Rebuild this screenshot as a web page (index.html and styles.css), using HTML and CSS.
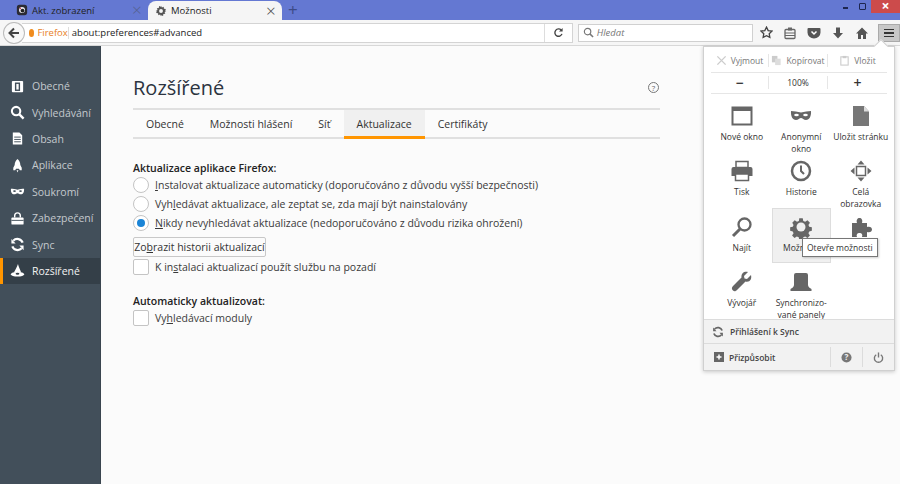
FILE: index.html
```html
<!DOCTYPE html>
<html lang="cs">
<head>
    <meta charset="UTF-8">
    <title>Možnosti</title>
    <link rel="stylesheet" href="styles.css">
</head>
<body>
    <div class="tabbar">
        <div class="tab">
            <svg class="tab-icon" viewBox="0 0 14 14"><rect x="1" y="1" width="12" height="12" rx="3" fill="#2b2b33"/><circle cx="7" cy="7" r="3.5" fill="#e8e8ee"/><circle cx="7.6" cy="7.6" r="2.2" fill="#222"/><circle cx="5" cy="5" r="1" fill="#c8485a"/></svg>
            <span class="tab-title">Akt. zobrazení</span>
            <span class="tab-close dim">×</span>
        </div>
        <div class="tab active">
            <svg class="tab-icon" viewBox="0 0 16 16"><path d="M8 1l1.2 2.2 2.4-.9.3 2.6 2.6.3-.9 2.4L15 8l-2.2 1.2.9 2.4-2.6.3-.3 2.6-2.4-.9L8 15l-1.2-2.2-2.4.9-.3-2.6-2.6-.3.9-2.4L1 8l2.4-1.4-.9-2.4 2.6-.3.3-2.6 2.4.9z" fill="#555"/><circle cx="8" cy="8" r="2.6" fill="#f5f5f5"/></svg>
            <span class="tab-title">Možnosti</span>
            <span class="tab-close">×</span>
        </div>
        <span class="new-tab">+</span>
        <div class="window-controls">
            <span class="win-min"></span>
            <span class="win-max"></span>
            <span class="win-close">×</span>
        </div>
    </div>

    <div class="toolbar">
        <div class="back">
            <svg viewBox="0 0 14 14" width="14" height="14"><path d="M12 7H3M7 2.5L2.5 7 7 11.5" fill="none" stroke="#444" stroke-width="2"/></svg>
        </div>
        <div class="urlbar">
            <span class="identity"><span class="identity-dot"></span>Firefox</span>
            <span class="url">about:preferences#advanced</span>
            <span class="reload">
                <svg viewBox="0 0 12 12" width="11" height="11"><path d="M9.8 7.5A4 4 0 1 1 9 3.4" fill="none" stroke="#444" stroke-width="1.5"/><path d="M10.5 1v4h-4z" fill="#444"/></svg>
            </span>
        </div>
        <div class="searchbar">
            <svg viewBox="0 0 12 12" width="11" height="11"><circle cx="5" cy="5" r="3.5" fill="none" stroke="#777" stroke-width="1.3"/><path d="M7.5 7.5L11 11" stroke="#777" stroke-width="1.6"/></svg>
            <span>Hledat</span>
        </div>
        <div class="toolbar-icons">
            <svg viewBox="0 0 14 14" width="13" height="13"><path d="M7 1.2l1.8 3.7 4 .6-2.9 2.8.7 4L7 10.4l-3.600 1.900.7-4L1.200 5.500l4-.6z" fill="none" stroke="#444" stroke-width="1.400"/></svg>
            <svg viewBox="0 0 14 14" width="14" height="14"><rect x="2" y="3.500" width="10" height="9" rx="1" fill="none" stroke="#666" stroke-width="1.300"/><rect x="5" y="1.500" width="4" height="3" fill="#666"/><path d="M2 7h10M2 9.500h10" stroke="#666"/></svg>
            <svg viewBox="0 0 14 14" width="14" height="14"><path d="M1.500 2h11a1 1 0 0 1 1 1v3.500a6.500 6 0 0 1-13 0V3a1 1 0 0 1 1-1z" fill="#555"/><path d="M4.500 5.500L7 8l2.500-2.500" fill="none" stroke="#fff" stroke-width="1.500"/></svg>
            <svg viewBox="0 0 14 14" width="14" height="14"><path d="M5 1.500h4V7h3l-5 5.500L2 7h3z" fill="#555"/></svg>
            <svg viewBox="0 0 14 14" width="14" height="14"><path d="M7 1.500L1 7.500h2V13h3V9h2v4h3V7.500h2z" fill="#555"/></svg>
        </div>
        <div class="hamburger"><span></span><span></span><span></span></div>
    </div>

    <div class="page">
        <nav class="sidebar">
            <div class="side-item">
                <svg viewBox="0 0 16 16"><rect x="2" y="2" width="12" height="12" rx="1" fill="#fff"/><rect x="6" y="4.500" width="4" height="7.500" fill="none" stroke="#424f5a" stroke-width="1.500"/></svg>
                Obecné
            </div>
            <div class="side-item">
                <svg viewBox="0 0 16 16"><circle cx="6.500" cy="6.500" r="4.500" fill="none" stroke="#fff" stroke-width="2.200"/><path d="M10 10l4.500 4.500" stroke="#fff" stroke-width="2.500"/></svg>
                Vyhledávání
            </div>
            <div class="side-item">
                <svg viewBox="0 0 16 16"><path d="M3 1.500h7l3 3v10H3z" fill="#fff"/><path d="M4.500 6.500h7M4.500 9h7M4.500 11.500h7" stroke="#424f5a"/></svg>
                Obsah
            </div>
            <div class="side-item">
                <svg viewBox="0 0 16 16"><path d="M8 1c2 1.500 3 4 3 6.500l1.500 3V13h-2l-1-1.500h-3L5.500 13h-2v-2.500L5 7.500C5 5 6 2.500 8 1z" fill="#fff"/><path d="M7 13h2l-1 2.500z" fill="#fff"/></svg>
                Aplikace
            </div>
            <div class="side-item">
                <svg viewBox="0 0 16 16"><path d="M1 5c2 0 4.500.5 7 1 2.500-.5 5-1 7-1 .3 3.500-1 6-3.500 6C10 11 9 9.800 8 9.800S6 11 4.500 11C2 11 .7 8.500 1 5z" fill="#fff"/><ellipse cx="4.800" cy="7.500" rx="1.500" ry=".9" fill="#424f5a"/><ellipse cx="11.200" cy="7.500" rx="1.500" ry=".9" fill="#424f5a"/></svg>
                Soukromí
            </div>
            <div class="side-item">
                <svg viewBox="0 0 16 16"><path d="M5 7V5a3 3 0 0 1 6 0v2" fill="none" stroke="#fff" stroke-width="1.500"/><rect x="1.500" y="7" width="13" height="7.500" rx="1" fill="#fff"/><path d="M1.500 10h13" stroke="#424f5a"/></svg>
                Zabezpečení
            </div>
            <div class="side-item">
                <svg viewBox="0 0 16 16"><path d="M13.500 6A6 6 0 0 0 3.500 4M2.500 10a6 6 0 0 0 10 2" fill="none" stroke="#fff" stroke-width="2.400"/><path d="M1.500 2v5h4.500zM14.500 14V9H10z" fill="#fff"/></svg>
                Sync
            </div>
            <div class="side-item selected">
                <svg viewBox="0 0 16 16"><path d="M8.500 1C9 4 11 7 12 10.500H4C5.500 7.500 7.500 4 8.500 1z" fill="#fff"/><ellipse cx="8" cy="12" rx="7" ry="2.500" fill="#fff"/><ellipse cx="8" cy="11.500" rx="2" ry="1" fill="#333d46"/></svg>
                Rozšířené
            </div>
        </nav>

        <main class="content">
            <header class="page-head">
                <h1>Rozšířené</h1>
                <span class="help">?</span>
            </header>
            <div class="tabs">
                <span class="tabs-item">Obecné</span>
                <span class="tabs-item">Možnosti hlášení</span>
                <span class="tabs-item">Síť</span>
                <span class="tabs-item current">Aktualizace</span>
                <span class="tabs-item">Certifikáty</span>
            </div>

            <h2>Aktualizace aplikace Firefox:</h2>
            <div class="option"><span class="radio"></span><span><u>I</u>nstalovat aktualizace automaticky (doporučováno z důvodu vyšší bezpečnosti)</span></div>
            <div class="option"><span class="radio"></span><span>Vyh<u>l</u>edávat aktualizace, ale zeptat se, zda mají být nainstalovány</span></div>
            <div class="option"><span class="radio checked"></span><span><u>N</u>ikdy nevyhledávat aktualizace (nedoporučováno z důvodu rizika ohrožení)</span></div>
            <button class="btn">Zo<u>b</u>razit historii aktualizací</button>
            <div class="option"><span class="check"></span><span>K in<u>s</u>talaci aktualizací použít službu na pozadí</span></div>

            <h2 class="second">Automaticky aktualizovat:</h2>
            <div class="option"><span class="check"></span><span>Vy<u>h</u>ledávací moduly</span></div>
        </main>
    </div>

    <aside class="panel">
        <span class="panel-arrow"></span>
        <div class="panel-body">
            <div class="edit-row muted">
                <span class="edit-cell">
                    <svg viewBox="0 0 12 12" width="11" height="11"><path d="M1.500 1.500l9 9M10.500 1.500l-9 9" stroke="#ccc" stroke-width="1.500"/></svg>
                    Vyjmout
                </span>
                <span class="edit-cell">
                    <svg viewBox="0 0 12 12" width="11" height="11"><rect x="1" y="1" width="6" height="7" fill="#ccc"/><rect x="4.500" y="4" width="6" height="7" fill="#ddd"/></svg>
                    Kopírovat
                </span>
                <span class="edit-cell">
                    <svg viewBox="0 0 12 12" width="11" height="11"><rect x="2" y="2" width="8" height="9" fill="none" stroke="#ccc" stroke-width="1.200"/><rect x="4" y="1" width="4" height="2.500" fill="#ccc"/></svg>
                    Vložit
                </span>
            </div>
            <div class="edit-row zoom-row">
                <span class="edit-cell big">−</span>
                <span class="edit-cell">100%</span>
                <span class="edit-cell big">+</span>
            </div>
            <div class="panel-grid">
                <div class="panel-item">
                    <svg viewBox="0 0 24 24"><rect x="2.500" y="3.500" width="19" height="17" fill="#fff" stroke="#666" stroke-width="2"/><rect x="2.500" y="3.500" width="19" height="3.500" fill="#666"/></svg>
                    <span>Nové okno</span>
                </div>
                <div class="panel-item">
                    <svg viewBox="0 0 24 24"><path d="M2 7c3 0 6.500.8 10 1.500C15.500 7.800 19 7 22 7c.4 5-1.500 9-5 9-2.200 0-3.600-2-5-2s-2.800 2-5 2c-3.500 0-5.400-4-5-9z" fill="#666"/><ellipse cx="7.500" cy="11" rx="2.300" ry="1.300" fill="#fff"/><ellipse cx="16.500" cy="11" rx="2.300" ry="1.300" fill="#fff"/></svg>
                    <span>Anonymní okno</span>
                </div>
                <div class="panel-item">
                    <svg viewBox="0 0 24 24"><path d="M4 2h11l5 5.500V22H4z" fill="#777"/><path d="M15 2v5.500h5z" fill="#ddd"/></svg>
                    <span>Uložit stránku</span>
                </div>
                <div class="panel-item">
                    <svg viewBox="0 0 24 24"><rect x="6" y="2.500" width="12" height="6" fill="#fff" stroke="#666" stroke-width="1.500"/><path d="M1.500 10a2 2 0 0 1 2-2h17a2 2 0 0 1 2 2v7h-21z" fill="#666"/><rect x="5.500" y="15" width="13" height="6.500" fill="#fff" stroke="#666" stroke-width="1.500"/></svg>
                    <span>Tisk</span>
                </div>
                <div class="panel-item">
                    <svg viewBox="0 0 24 24"><circle cx="12" cy="12" r="9" fill="#fff" stroke="#666" stroke-width="2.500"/><path d="M12 6.500V12l3 3" fill="none" stroke="#666" stroke-width="2"/></svg>
                    <span>Historie</span>
                </div>
                <div class="panel-item">
                    <svg viewBox="0 0 24 24"><rect x="7.500" y="7.500" width="9" height="9" fill="#fff" stroke="#666" stroke-width="1.500"/><path d="M12 1.500l3.500 4h-7zM12 22.500l3.500-4h-7zM1.500 12l4-3.500v7zM22.500 12l-4-3.500v7z" fill="#666"/></svg>
                    <span>Celá obrazovka</span>
                </div>
                <div class="panel-item">
                    <svg viewBox="0 0 24 24"><circle cx="14.500" cy="9.500" r="6" fill="none" stroke="#666" stroke-width="2.300"/><path d="M10 14l-7 7" stroke="#666" stroke-width="3"/></svg>
                    <span>Najít</span>
                </div>
                <div class="panel-item hover">
                    <svg viewBox="0 0 24 24"><path d="M10 2h4l.6 3 2.200.9 2.600-1.700 2.800 2.800-1.700 2.600.9 2.200 3 .6v4l-3 .6-.9 2.200 1.700 2.600-2.800 2.800-2.600-1.700-2.200.9-.6 3h-4l-.6-3-2.200-.9-2.600 1.700-2.800-2.800 1.700-2.600-.9-2.200-3-.6v-4l3-.6.9-2.200L2 7l2.800-2.800 2.600 1.700 2.200-.9z" fill="#666" transform="translate(1.500 1.500) scale(.875)"/><circle cx="12" cy="12" r="4.500" fill="#f0f0f0"/></svg>
                    <span>Možnosti</span>
                </div>
                <div class="panel-item">
                    <svg viewBox="0 0 24 24"><path d="M3 8h5c-1-3 .5-5 2.500-5S14 5 13 8h5v4c3-1 5 .5 5 2.500S21 18 18 17v5h-5c1-2.500-.5-4-2.500-4S7 19.500 8 22H3z" fill="#666"/></svg>
                    <span>Doplňky</span>
                </div>
                <div class="panel-item">
                    <svg viewBox="0 0 24 24"><path d="M21 5l-4 4-2.500-.5L14 6l4-4c-3.500-1-7 1-6.500 5.500L3 16c-1.500 1.500-1.500 3 0 4.500s3 .5 4-.5l8.500-8.500C20 12.500 22 9 21 5z" fill="#666"/></svg>
                    <span>Vývojář</span>
                </div>
                <div class="panel-item">
                    <svg viewBox="0 0 24 24"><path d="M7 3h10a2 2 0 0 1 2 2v10c0 2 2 3 3.500 4v2h-21v-2C3 18 5 17 5 15V5a2 2 0 0 1 2-2z" fill="#666"/></svg>
                    <span>Synchronizo-<br>vané panely</span>
                </div>
            </div>
            <div class="sync-row">
                <svg viewBox="0 0 16 16" width="12" height="12"><path d="M13.500 6A6 6 0 0 0 3.500 4M2.500 10a6 6 0 0 0 10 2" fill="none" stroke="#666" stroke-width="2.400"/><path d="M1.500 2v5h4.500zM14.500 14V9H10z" fill="#666"/></svg>
                Přihlášení k Sync
            </div>
            <div class="footer-row">
                <div class="customize">
                    <svg viewBox="0 0 12 12" width="10" height="10"><rect width="12" height="12" fill="#666"/><path d="M6 3v6M3 6h6" stroke="#fff" stroke-width="1.800"/></svg>
                    Přizpůsobit
                </div>
                <div class="footer-btn">
                    <svg viewBox="0 0 12 12" width="11" height="11"><circle cx="6" cy="6" r="5.500" fill="#777"/><text x="6" y="9" class="footer-q">?</text></svg>
                </div>
                <div class="footer-btn">
                    <svg viewBox="0 0 12 12" width="11" height="11"><path d="M3.500 3a4.500 4.500 0 1 0 5 0" fill="none" stroke="#777" stroke-width="1.500"/><path d="M6 .5V6" stroke="#777" stroke-width="1.500"/></svg>
                </div>
            </div>
        </div>
        <div class="tooltip">Otevře možnosti</div>
    </aside>
</body>
</html>
```

FILE: styles.css
```css
body {
    margin: 0;
    padding: 0;
    height: 484px;
    overflow: hidden;
    position: relative;
    font-family: "Open Sans", "Noto Sans", sans-serif;
    font-size: 10.5px;
    color: #333;
    background-color: #fbfbfb;
}
u {
    text-decoration-thickness: 1px;
}
.tabbar {
    height: 20px;
    display: flex;
    background-color: #6478d2;
}
.tab {
    width: 132px;
    padding-left: 16px;
    display: flex;
    align-items: center;
    gap: 4px;
    color: #222;
    font-size: 9.5px;
}
.tab.active {
    width: 127px;
    padding-left: 7px;
    padding-right: 0;
    margin-left: 0;
    margin-top: 1px;
    height: 19px;
    background-color: #f5f5f5;
    border-radius: 8px 8px 0 0;
}
.tab-icon {
    width: 12px;
    height: 12px;
    flex: none;
}
.tab-title {
    flex: 1;
}
.tab-close {
    font-size: 17px;
    font-weight: 300;
    color: #444;
    width: 16px;
    line-height: 18px;
}
.tab-close.dim {
    color: #56618f;
}
.new-tab {
    margin-left: 6px;
    font-size: 17px;
    line-height: 20px;
    color: #3c4a86;
}
.window-controls {
    margin-left: auto;
    display: flex;
    align-items: flex-start;
    height: 13px;
}
.win-min {
    width: 5px;
    height: 2px;
    margin: 7px 11px 0 0;
    background-color: #1d2650;
}
.win-max {
    width: 5px;
    height: 5px;
    margin: 3px 5px 0 0;
    border: 1.5px solid #1d2650;
    border-radius: 1px;
}
.win-close {
    width: 29px;
    height: 13px;
    background-color: #cc4b4b;
    color: #fff;
    font-size: 14px;
    font-weight: 700;
    line-height: 12px;
    text-align: center;
}
.toolbar {
    height: 26px;
    display: flex;
    align-items: center;
    background-color: #f6f6f6;
    border-bottom: 1px solid #d8d8d8;
    box-sizing: border-box;
    padding-left: 3px;
}
.back {
    width: 20px;
    height: 20px;
    border: 1px solid #bbb;
    border-radius: 50%;
    background-color: #f8f8f8;
    display: flex;
    align-items: center;
    justify-content: center;
    z-index: 1;
}
.urlbar {
    width: 555px;
    height: 18px;
    margin-left: -3px;
    background-color: #fff;
    border-top: 1px solid #d4d4d4;
    border-bottom: 1px solid #d4d4d4;
    border-right: 1px solid #d4d4d4;
    display: flex;
    align-items: center;
    font-size: 9.5px;
    color: #222;
}
.identity {
    display: flex;
    align-items: center;
    gap: 3px;
    width: 39px;
    padding-left: 7px;
    color: #e87e1e;
    border-right: 1px solid #ddd;
    height: 12px;
}
.identity-dot {
    width: 8px;
    height: 8px;
    border-radius: 50%;
    background-color: #f08c1e;
}
.url {
    flex: 1;
    padding-left: 3px;
}
.reload {
    width: 27px;
    height: 100%;
    border-left: 1px solid #ddd;
    display: flex;
    align-items: center;
    justify-content: center;
}
.searchbar {
    width: 171px;
    height: 14px;
    margin-left: 5px;
    padding: 1px 0 1px 4px;
    background-color: #fff;
    border: 1px solid #d0d0d0;
    display: flex;
    align-items: center;
    gap: 3px;
    font-size: 9.5px;
    font-style: italic;
    color: #777;
}
.toolbar-icons {
    display: flex;
    align-items: center;
    gap: 10px;
    margin-left: 7px;
}
.hamburger {
    width: 20px;
    height: 15px;
    margin-left: 9px;
    padding-top: 1px;
    background-color: #c8c8c8;
    border: 1px solid #aaa;
    display: flex;
    flex-direction: column;
    align-items: center;
    justify-content: center;
    gap: 2px;
}
.hamburger span {
    width: 10px;
    height: 1.5px;
    background-color: #333;
}
.page {
    display: flex;
    height: 438px;
}
.sidebar {
    width: 101px;
    padding-top: 27px;
    box-sizing: border-box;
    background-color: #424f5a;
    color: #c4c9cd;
    border-right: 1px solid #3a454f;
}
.side-item {
    height: 26.4px;
    display: flex;
    align-items: center;
    gap: 7px;
    padding-left: 10px;
    box-sizing: border-box;
    font-size: 10.5px;
}
.side-item svg {
    width: 15px;
    height: 15px;
    flex: none;
}
.side-item.selected {
    background-color: #343f48;
    color: #f2f2f2;
    border-left: 3px solid #ff9500;
    padding-left: 7px;
}
.content {
    flex: 1;
    padding: 0 240px 0 32px;
}
.page-head {
    height: 64px;
    box-sizing: border-box;
    border-bottom: 2px solid #e0e0e0;
    display: flex;
    align-items: center;
    justify-content: space-between;
    padding-top: 20px;
}
h1 {
    margin: 0;
    font-size: 20px;
    font-weight: 400;
    color: #2c3440;
}
.help {
    width: 9px;
    height: 9px;
    margin-right: 1px;
    border: 1px solid #777;
    border-radius: 50%;
    font-size: 8px;
    line-height: 9px;
    text-align: center;
    color: #666;
}
.tabs {
    height: 29px;
    display: flex;
    box-sizing: border-box;
    border-bottom: 2px solid #e0e0e0;
    margin-bottom: 22px;
    padding-left: 0;
}
.tabs-item {
    padding: 0 13px;
    line-height: 28px;
    height: 29px;
    box-sizing: border-box;
}
.tabs-item.current {
    background-color: #f0f0f0;
    border-bottom: 3px solid #ff9500;
}
h2 {
    margin: 0;
    font-size: 10.5px;
    font-weight: 600;
    line-height: 14px;
    color: #222;
}
h2.second {
    margin-top: 18px;
}
.option {
    height: 19px;
    display: flex;
    align-items: center;
    gap: 6px;
    color: #3a3a3a;
}
.radio {
    width: 14px;
    height: 14px;
    border: 1px solid #c4c4c4;
    border-radius: 50%;
    background-color: #fff;
    display: flex;
    align-items: center;
    justify-content: center;
}
.radio.checked::after {
    content: "";
    width: 8px;
    height: 8px;
    border-radius: 50%;
    background-color: #1a84d6;
}
.check {
    width: 14px;
    height: 14px;
    border: 1px solid #c4c4c4;
    border-radius: 2px;
    background-color: #fff;
}
.btn {
    display: block;
    height: 20px;
    width: 133px;
    margin: 5px 0 0;
    padding: 0;
    border: 1px solid #c8c8c8;
    border-radius: 2px;
    background-color: #fbfbfb;
    font-family: inherit;
    font-size: 10.5px;
    color: #333;
}
.panel {
    position: absolute;
    left: 703px;
    top: 46px;
    width: 192px;
    height: 325px;
    box-sizing: border-box;
    background-color: #fff;
    border: 1px solid #d0d0d0;
    box-shadow: 0 1px 4px rgba(0, 0, 0, 0.2);
    font-size: 8.5px;
    color: #333;
}
.panel-arrow {
    position: absolute;
    top: -6px;
    left: 172px;
    width: 9px;
    height: 9px;
    background-color: #fff;
    border-top: 1px solid #d0d0d0;
    border-left: 1px solid #d0d0d0;
    transform: rotate(45deg);
}
.panel-body {
    position: relative;
    height: 100%;
    display: flex;
    flex-direction: column;
}
.edit-row {
    display: grid;
    grid-template-columns: 58px 59px 59px;
    height: 23px;
    margin: 0 7px;
    padding-top: 3px;
    align-items: center;
    border-bottom: 1px solid #e6e6e6;
    text-align: center;
}
.edit-row.muted {
    color: #777;
}
.zoom-row {
    height: 21px;
    padding-top: 0;
}
.edit-cell {
    display: flex;
    align-items: center;
    justify-content: center;
    gap: 4px;
    height: 13px;
    border-right: 1px solid #e6e6e6;
}
.edit-cell:last-child {
    border-right: none;
}
.edit-cell.big {
    font-size: 14px;
    font-weight: 600;
}
.panel-grid {
    flex: 1;
    display: grid;
    grid-template-columns: repeat(3, 59.5px);
    grid-auto-rows: 55.5px;
    padding: 3px 6px 0 8px;
}
.panel-item {
    display: flex;
    flex-direction: column;
    align-items: center;
    text-align: center;
    padding-top: 7px;
    line-height: 12px;
    box-sizing: border-box;
}
.panel-item svg {
    width: 24px;
    height: 24px;
    margin-bottom: 3px;
    flex: none;
}
.panel-item.hover {
    background-color: #f0f0f0;
    border: 1px solid #ddd;
    padding-top: 6px;
}
.sync-row {
    height: 27px;
    display: flex;
    align-items: center;
    gap: 6px;
    padding-left: 8px;
    background-color: #f2f2f2;
    border-top: 1px solid #dcdcdc;
    border-bottom: 1px solid #dcdcdc;
    font-weight: 600;
    color: #444;
    box-sizing: border-box;
}
.footer-row {
    height: 27px;
    display: flex;
    background-color: #f2f2f2;
}
.customize {
    flex: 1;
    display: flex;
    align-items: center;
    gap: 5px;
    padding-left: 10px;
    font-weight: 600;
    color: #444;
}
.footer-btn {
    width: 31px;
    display: flex;
    align-items: center;
    justify-content: center;
    border-left: 1px solid #dcdcdc;
    margin: 3px 0;
}
.footer-q {
    font-size: 9px;
    font-weight: 700;
    fill: #f2f2f2;
    text-anchor: middle;
}
.tooltip {
    position: absolute;
    left: 98px;
    top: 191px;
    padding: 2px 4px;
    line-height: 13px;
    background-color: #fff;
    border: 1px solid #777;
    box-shadow: 1px 1px 2px rgba(0, 0, 0, 0.2);
    white-space: nowrap;
    color: #333;
}
```
